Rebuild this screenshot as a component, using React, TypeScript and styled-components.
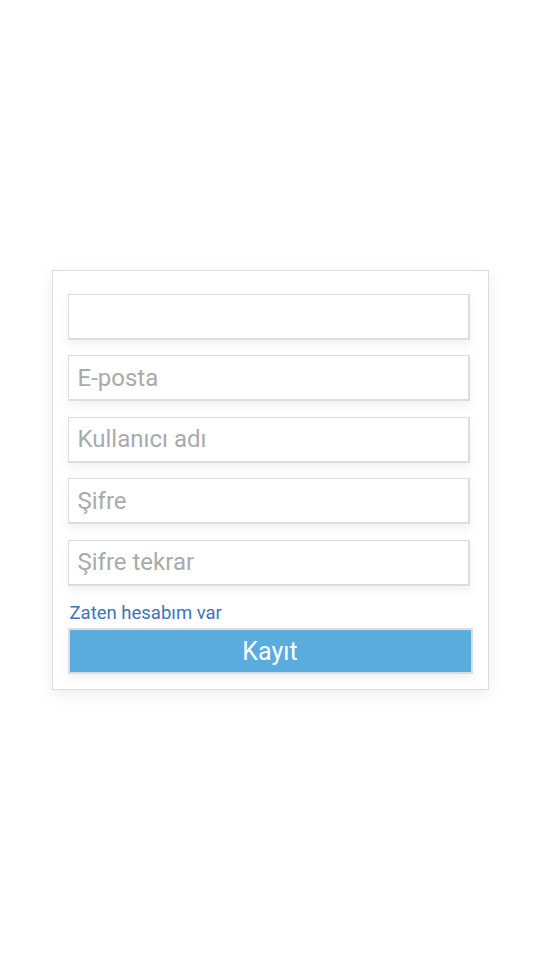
import styled, { createGlobalStyle } from "styled-components";

const GlobalStyle = createGlobalStyle`
  html, body {
    margin: 0;
    padding: 0;
    background: #ffffff;
    font-family: Roboto, "Noto Sans", sans-serif;
  }
  * {
    box-sizing: border-box;
  }
`;

const fields = ["", "E-posta", "Kullanıcı adı", "Şifre", "Şifre tekrar"];

export default function App() {
  return (
    <>
      <GlobalStyle />
      <Page>
        <Card>
          {fields.map((placeholder, i) => (
            <Input
              key={i}
              type={placeholder.startsWith("Şifre") ? "password" : "text"}
              placeholder={placeholder}
            />
          ))}
          <LoginLink href="#">Zaten hesabım var</LoginLink>
          <SubmitButton type="button">Kayıt</SubmitButton>
        </Card>
      </Page>
    </>
  );
}

const Page = styled.div`
  width: 540px;
  height: 960px;
  display: flex;
  align-items: center;
  justify-content: center;
`;

const Card = styled.div`
  width: 437px;
  padding: 23px 15px 15px 15px;
  border: 1px solid #dddddd;
  background: #ffffff;
  box-shadow: 0 4px 14px rgba(0, 0, 0, 0.08);
  display: flex;
  flex-direction: column;
`;

const Input = styled.input`
  width: 402px;
  height: 46px;
  margin-bottom: 15.5px;
  padding: 0 9px;
  border: 1px solid #dddddd;
  border-right-width: 2px;
  border-bottom-width: 2px;
  background: #ffffff;
  box-shadow: 0 5px 10px rgba(0, 0, 0, 0.06);
  font-family: Roboto, sans-serif;
  font-size: 24px;
  color: #555555;
  outline: none;

  &::placeholder {
    color: #aaaaaa;
  }

  &:nth-of-type(5) {
    margin-bottom: 0;
  }
`;

const LoginLink = styled.a`
  align-self: flex-start;
  margin: 16px 0 4.5px 2px;
  font-size: 18.5px;
  line-height: 22px;
  color: #3b74ba;
  text-decoration: none;
`;

const SubmitButton = styled.button`
  width: 405px;
  height: 46px;
  border: 2px solid #dddddd;
  background: #5aacdf;
  color: #ffffff;
  font-family: Roboto, sans-serif;
  font-size: 25px;
  box-shadow: 0 5px 10px rgba(0, 0, 0, 0.06);
  cursor: pointer;
  padding: 0;
`;
